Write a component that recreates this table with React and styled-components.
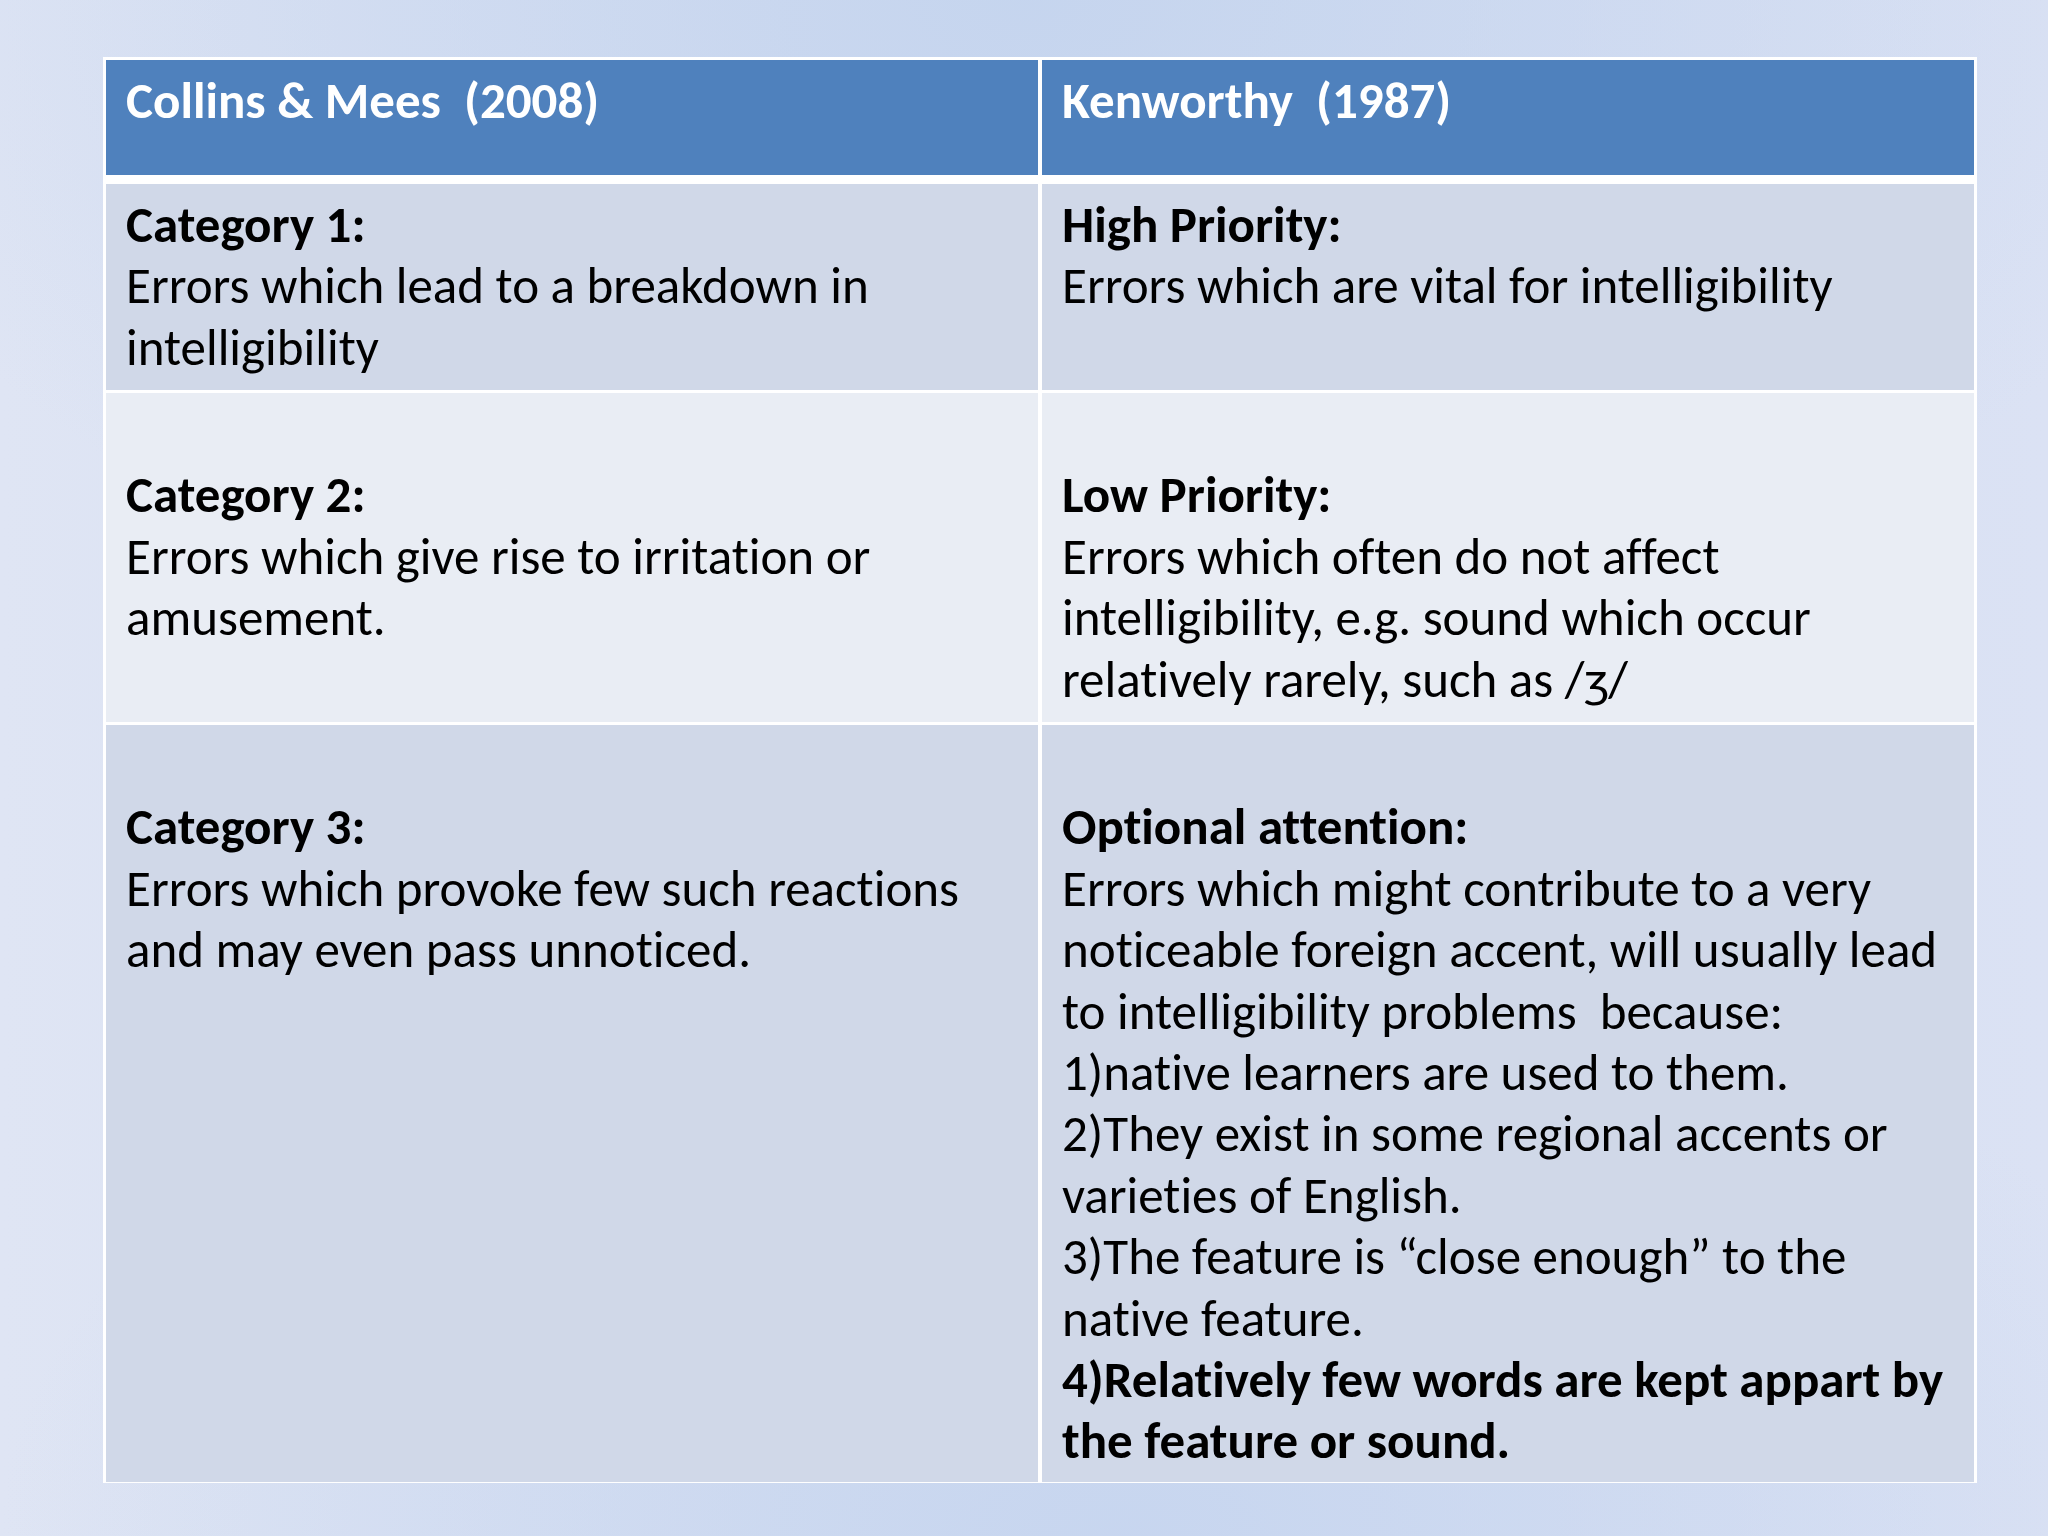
import React from 'react'
import styled, { createGlobalStyle } from 'styled-components'

const Global = createGlobalStyle`
  html, body { margin: 0; padding: 0; }
  body {
    font-family: Carlito, Calibri, "Liberation Sans Narrow", "Liberation Sans", sans-serif;
    font-variant-ligatures: none;
  }
`

const Slide = styled.div`
  width: 2048px;
  height: 1536px;
  box-sizing: border-box;
  padding: 57px 71px 53px 103px;
  background:
    radial-gradient(ellipse 60% 45% at 50% 0%, rgba(196, 212, 238, 0.9), rgba(196, 212, 238, 0) 100%),
    radial-gradient(ellipse 55% 40% at 55% 100%, rgba(198, 213, 239, 0.9), rgba(198, 213, 239, 0) 100%),
    linear-gradient(90deg, #dfe5f4 0%, #d3ddf1 50%, #dbe2f4 100%);
`

const Table = styled.div`
  display: flex;
  flex-direction: column;
  background: #fff;
  padding: 3px;
  box-sizing: border-box;
  width: 1874px;
`

const Row = styled.div`
  display: grid;
  grid-template-columns: 932px 932px;
  column-gap: 4px;
  height: ${p => p.$h}px;
  margin-top: ${p => p.$gap || 0}px;
`

const Cell = styled.div`
  box-sizing: border-box;
  padding: 10px 20px;
  background: ${p => p.$bg};
  color: ${p => (p.$head ? '#fff' : '#000')};
  font-size: 51px;
  line-height: 61.4px;
  font-weight: ${p => (p.$head ? 700 : 400)};
  white-space: pre;
`

const Line = styled.div`
  font-weight: ${p => (p.$bold ? 700 : 'inherit')};
`

const HEAD = '#4f81bd'
const BAND = '#d0d8e8'
const LIGHT = '#e9edf4'

const rows = [
  {
    h: 206,
    gap: 9,
    bg: BAND,
    left: [['Category 1:', true], ['Errors which lead to a breakdown in'], ['intelligibility']],
    right: [['High Priority:', true], ['Errors which are vital for intelligibility']],
  },
  {
    h: 329,
    gap: 3,
    bg: LIGHT,
    left: [[' '], ['Category 2:', true], ['Errors which give rise to irritation or'], ['amusement.']],
    right: [
      [' '],
      ['Low Priority:', true],
      ['Errors which often do not affect'],
      ['intelligibility, e.g. sound which occur'],
      ['relatively rarely, such as /ʒ/'],
    ],
  },
  {
    h: 755,
    gap: 3,
    bg: BAND,
    left: [[' '], ['Category 3:', true], ['Errors which provoke few such reactions'], ['and may even pass unnoticed.']],
    right: [
      [' '],
      ['Optional attention:', true],
      ['Errors which might contribute to a very'],
      ['noticeable foreign accent, will usually lead'],
      ['to intelligibility problems  because:'],
      ['1)native learners are used to them.'],
      ['2)They exist in some regional accents or'],
      ['varieties of English.'],
      ['3)The feature is \u201cclose enough\u201d to the'],
      ['native feature.'],
      ['4)Relatively few words are kept appart by', true],
      ['the feature or sound.', true],
    ],
  },
]

const Lines = ({ items }) =>
  items.map(([text, bold], i) => (
    <Line key={i} $bold={bold}>
      {text}
    </Line>
  ))

export default function App() {
  return (
    <>
      <Global />
      <Slide>
        <Table>
          <Row $h={115}>
            <Cell $bg={HEAD} $head>Collins &amp; Mees  (2008)</Cell>
            <Cell $bg={HEAD} $head>Kenworthy  (1987)</Cell>
          </Row>
          {rows.map((r, i) => (
            <Row key={i} $h={r.h} $gap={r.gap}>
              <Cell $bg={r.bg}>
                <Lines items={r.left} />
              </Cell>
              <Cell $bg={r.bg}>
                <Lines items={r.right} />
              </Cell>
            </Row>
          ))}
        </Table>
      </Slide>
    </>
  )
}
